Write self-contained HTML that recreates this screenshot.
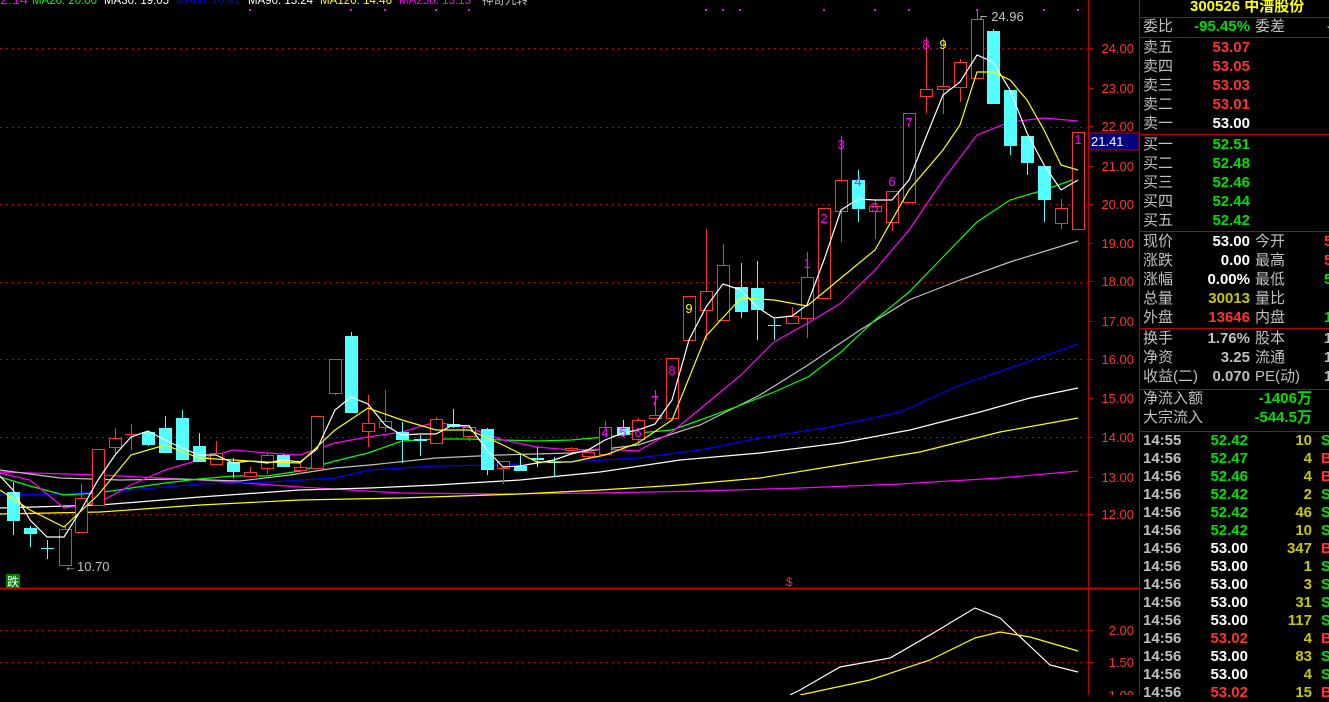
<!DOCTYPE html><html><head><meta charset="utf-8"><style>
body{margin:0;background:#000;width:1329px;height:695px;overflow:hidden;position:relative;font-family:"Liberation Sans","WenQuanYi Zen Hei","Noto Sans CJK SC",sans-serif}
svg{position:absolute;left:0;top:0}
.rp{position:absolute;left:1140px;top:0;width:189px;height:695px}
.r{position:absolute;height:19px;line-height:19px;font-size:15px;white-space:nowrap}
.b{font-weight:bold}
.hl{position:absolute;left:0;width:189px;height:1px;background:#c00000}
</style></head><body>
<svg id="s" width="1329" height="695" font-family="Liberation Sans, WenQuanYi Zen Hei, sans-serif"></svg>
<div class="rp" id="rp"></div>
<script>
var s=document.getElementById('s'),h='';
[48,127,204,282,359,437,514,630,662].forEach(function(y){h+='<line x1="0" x2="1087" y1="'+(y+.5)+'" y2="'+(y+.5)+'" stroke="#c00000" stroke-dasharray="2,4"/>';});
h+='<line x1="1088.5" x2="1088.5" y1="0" y2="695" stroke="#c00000"/><line x1="1139.5" x2="1139.5" y1="0" y2="695" stroke="#c00000"/>';
h+='<line x1="0" x2="1140" y1="588.5" y2="588.5" stroke="#c00000" stroke-width="2"/>';
var lab=[[48,'24.00'],[88,'23.00'],[126,'22.00'],[166,'21.00'],[204,'20.00'],[243,'19.00'],[281,'18.00'],[321,'17.00'],[359,'16.00'],[398,'15.00'],[437,'14.00'],[477,'13.00'],[514,'12.00'],[630,'2.00'],[662,'1.50'],[695,'1.00']];
lab.forEach(function(a){h+='<line x1="1088" x2="1093" y1="'+(a[0]+.5)+'" y2="'+(a[0]+.5)+'" stroke="#c00000"/><text x="1134" y="'+(a[0]+5)+'" fill="#ff3232" font-size="13" text-anchor="end">'+a[1]+'</text>';});
h+='<rect x="1089" y="133" width="50" height="17" fill="#000080" stroke="#c00000"/><text x="1091" y="146" fill="#fff" font-size="13">21.41</text>';
function pl(p,c){h+='<polyline fill="none" stroke="'+c+'" stroke-width="1.2" points="'+p+'"/>';}
pl('0,472 100,475 200,480 300,487 400,493 500,494 600,493 700,491 800,488 900,484 1000,478 1078,471','#ff00ff');
pl('0,514 100,512 200,505 300,500 400,498 520,494 600,490 680,485 760,478 840,465 920,452 1000,432 1078,418','#ffff00');
pl('0,508 100,505 200,497 300,490 370,488 436,485 520,480 600,472 680,460 760,453 840,443 910,430 980,412 1030,398 1078,388','#ffffff');
pl('0,495 60,494 130,490 200,484 270,482 335,478 370,470 436,466 500,465 571,462 638,458 700,450 760,438 830,427 900,412 960,385 1010,368 1078,344','#0000ff');
pl('0,470 60,478 120,480 180,479 240,481 290,475 335,468 370,465 436,458 500,455 571,453 638,445 700,425 760,395 808,365 860,330 909,300 960,280 1010,262 1078,241','#c0c0c0');
pl('0,477 30,486 64,495 98,493 131,488 165,483 199,479 233,476 267,476 300,471 335,461 368,453 402,441 436,439 469,439 503,440 537,441 571,440 605,437 638,433 672,430 706,418 741,405 774,392 808,377 841,352 875,320 909,292 943,257 977,222 1010,200 1044,190 1078,178','#00ff00');
pl('0,473 30,480 64,508 98,503 131,485 165,470 199,460 233,450 267,453 300,455 335,443 368,437 402,432 436,422 469,428 503,440 537,447 571,450 605,449 638,451 672,432 706,404 741,375 774,342 808,323 841,303 875,270 892,250 909,230 943,180 977,135 1010,122 1044,118 1078,121','#ff00ff');
var c=[[13,492,521,482,535,0],[30,528,534,526,547,0],[47,548,548,540,559,0],[65,529,565,526,565,1],[81,498,532,484,532,1],[98,449,505,449,505,1],[115,438,447,428,455,1],[131,434,434,424,450,1],[148,432,445,431,446,0],[165,428,453,416,453,0],[182,418,460,410,460,0],[199,446,462,433,462,0],[216,453,464,441,464,1],[233,462,472,458,478,0],[250,472,476,467,478,1],[267,455,468,453,474,1],[283,455,467,454,467,0],[300,467,470,462,474,1],[317,416,468,416,468,1],[335,359,393,359,395,1],[351,336,413,332,413,0],[368,423,431,395,447,1],[385,421,427,390,432,1],[402,432,440,422,463,0],[420,439,441,435,456,0],[436,419,443,417,443,1],[453,424,427,409,428,0],[469,427,436,425,441,1],[487,429,470,428,475,0],[503,461,468,461,484,1],[520,466,471,453,471,0],[537,458,460,447,467,0],[554,462,462,457,477,0],[571,448,450,447,451,1],[588,452,456,450,458,1],[605,427,454,421,454,1],[623,427,435,420,436,0],[638,420,439,418,442,1],[655,415,418,390,419,1],[672,358,418,358,418,1],[689,296,340,296,340,1],[706,291,310,229,340,1],[723,265,320,244,320,1],[741,287,312,263,318,0],[757,288,310,261,340,0],[774,325,325,319,340,0],[792,316,323,307,323,1],[807,277,318,252,338,1],[824,208,298,208,298,1],[841,180,211,136,242,1],[858,180,209,170,222,0],[875,206,211,200,239,1],[892,191,222,191,231,1],[909,113,202,113,204,1],[926,89,96,37,113,1],[943,86,89,38,114,1],[960,62,87,59,102,1],[977,19,78,10,78,1],[993,31,104,29,104,0],[1010,90,146,90,155,0],[1027,136,163,136,175,0],[1044,166,200,166,222,0],[1061,208,223,199,229,1],[1078,132,229,132,229,1]];
c.forEach(function(k){var x=k[0],col=k[5]?'#ff3232':'#54ffff',w=12;
h+='<line x1="'+(x+.5)+'" x2="'+(x+.5)+'" y1="'+k[3]+'" y2="'+k[4]+'" stroke="'+col+'"/>';
if(k[2]-k[1]<1){h+='<line x1="'+(x-6)+'" x2="'+(x+7)+'" y1="'+(k[1]+.5)+'" y2="'+(k[1]+.5)+'" stroke="'+col+'"/>';}
else if(k[5])h+='<rect x="'+(x-5.5)+'" y="'+(k[1]+.5)+'" width="'+w+'" height="'+(k[2]-k[1])+'" fill="#000" stroke="'+col+'"/>';
else h+='<rect x="'+(x-6)+'" y="'+k[1]+'" width="'+(w+1)+'" height="'+(k[2]-k[1])+'" fill="'+col+'"/>';});
pl('0,476 13,490 30,520 47,537 64,537 81,510 98,480 115,455 131,437 148,431 165,440 182,448 199,455 216,455 233,463 250,461 267,463 283,460 300,462 317,449 335,410 351,397 368,404 385,425 402,435 420,434 436,434 453,425 469,426 487,450 503,467 520,466 537,463 554,460 571,454 588,450 605,440 623,433 638,430 655,424 672,400 689,340 706,307 723,284 741,290 757,307 774,318 792,316 807,305 824,260 841,210 858,199 875,200 892,200 909,180 926,137 943,95 960,82 977,55 993,62 1010,90 1027,133 1044,165 1061,190 1078,180','#ffffff');
pl('0,490 30,510 64,527 98,495 131,455 165,445 199,458 233,460 267,462 300,463 335,430 368,408 402,420 436,430 469,430 503,445 537,462 571,462 605,455 638,443 672,420 706,336 741,298 774,300 807,306 841,278 875,250 909,190 943,150 960,125 977,72 993,72 1010,80 1027,100 1044,130 1061,165 1078,170','#ffff00');
[[605,437,'4','#ff00ff'],[623,437,'5','#ff00ff'],[638,437,'6','#ff00ff'],[655,405,'7','#ff00ff'],[672,375,'8','#ff00ff'],[689,313,'9','#ffff00'],[807,268,'1','#ff00ff'],[824,223,'2','#ff00ff'],[841,149,'3','#ff00ff'],[858,186,'4','#ff00ff'],[875,212,'5','#ff00ff'],[892,186,'6','#ff00ff'],[909,127,'7','#ff00ff'],[926,49,'8','#ff00ff'],[943,49,'9','#ffff00'],[1078,144,'1','#ff00ff']].forEach(function(d){h+='<text x="'+d[0]+'" y="'+d[1]+'" fill="'+d[3]+'" font-size="13" text-anchor="middle">'+d[2]+'</text>';});
[250,351,385,436,469,706,723,740,824,875,909,977,1044,1078].forEach(function(x){h+='<rect x="'+(x-1)+'" y="9" width="2" height="2" fill="#ff00ff"/>';});
h+='<text x="64" y="571" fill="#c0c0c0" font-size="13">←10.70</text><text x="980" y="21" fill="#c0c0c0" font-size="13">⌐ 24.96</text>';
h+='<rect x="6" y="574" width="14" height="14" fill="#008000"/><text x="7" y="586" fill="#fff" font-size="12">跌</text><text x="786" y="586" fill="#ff3232" font-size="12">$</text>';
pl('790,695 800,690 840,667 890,658 930,635 975,608 1000,618 1050,665 1078,672','#ffffff');
pl('800,695 870,680 930,660 975,638 1000,632 1030,637 1078,651','#ffff00');
var t=[[0,'2.14','#ff00ff',28],[32,'MA20: 20.00','#00ff00',65],[104,'MA30: 19.05','#ffffff',65],[176,'MA60: 16.41','#0000ff',64],[248,'MA90: 15.24','#ffffff',65],[320,'MA120: 14.46','#ffff00',72],[399,'MA250: 13.13','#ff00ff',72],[482,'神奇九转','#c0c0c0',46]];
t.forEach(function(a){h+='<text x="'+a[0]+'" y="4" fill="'+a[2]+'" font-size="12" textLength="'+a[3]+'" lengthAdjust="spacingAndGlyphs">'+a[1]+'</text>';});
s.innerHTML=h;
var r='',G='#c0c0c0',R='#ff3232',Gr='#00e000',W='#fff',Y='#c8c800';
function row(x,y,t,c,b,al){r+='<div class="r'+(b?' b':'')+'" style="'+(al?'right:'+(189-x)+'px':'left:'+x+'px')+';top:'+(y-10)+'px;color:'+c+'">'+t+'</div>';}
row(50,7,'300526 中潽股份','#ffff00',1);
[17,37,134,231,328,389,431].forEach(function(y){r+='<div class="hl" style="top:'+y+'px"></div>';});
row(3,27,'委比',G);row(110,27,'-95.45%',Gr,1,1);row(115,27,'委差',G);row(187,27,'-',Gr,1);
var sell=[['卖五','53.07',R],['卖四','53.05',R],['卖三','53.03',R],['卖二','53.01',R],['卖一','53.00',W]];
sell.forEach(function(a,i){var y=48+i*19;row(3,y,a[0],G);row(110,y,a[1],a[2],1,1);});
['买一','买二','买三','买四','买五'].forEach(function(a,i){var y=145+i*19;row(3,y,a,G);row(110,y,['52.51','52.48','52.46','52.44','52.42'][i],Gr,1,1);});
var q=[['现价','53.00',W,'今开',R],['涨跌','0.00',W,'最高',R],['涨幅','0.00%',W,'最低',Gr],['总量','30013',Y,'量比',''],['外盘','13646',R,'内盘',Gr]];
q.forEach(function(a,i){var y=242+i*19;row(3,y,a[0],G);row(110,y,a[1],a[2],1,1);row(115,y,a[3],G);if(a[4])row(184,y,i==4?'1':'5',a[4],1);});
[['换手','1.76%','股本'],['净资','3.25','流通'],['收益(二)','0.070','PE(动)']].forEach(function(a,i){var y=339+i*19;row(3,y,a[0],G);row(110,y,a[1],G,1,1);row(115,y,a[2],G);row(184,y,'1',G,1);});
row(3,399,'净流入额',G);row(172,399,'-1406万',Gr,1,1);row(3,418,'大宗流入',G);row(172,418,'-544.5万',Gr,1,1);
var tk=[['14:55','52.42',Gr,'10','S'],['14:56','52.47',Gr,'4','B'],['14:56','52.46',Gr,'4','B'],['14:56','52.42',Gr,'2','S'],['14:56','52.42',Gr,'46','S'],['14:56','52.42',Gr,'10','S'],['14:56','53.00',W,'347','B'],['14:56','53.00',W,'1','S'],['14:56','53.00',W,'3','S'],['14:56','53.00',W,'31','S'],['14:56','53.00',W,'117','S'],['14:56','53.02',R,'4','B'],['14:56','53.00',W,'83','S'],['14:56','53.00',W,'4','S'],['14:56','53.02',R,'15','B']];
tk.forEach(function(a,i){var y=441+i*18;row(3,y,a[0],G,1);row(108,y,a[1],a[2],1,1);row(172,y,a[3],Y,1,1);row(181,y,a[4],a[4]=='S'?Gr:R,1);});
document.getElementById('rp').innerHTML=r;
</script></body></html>
